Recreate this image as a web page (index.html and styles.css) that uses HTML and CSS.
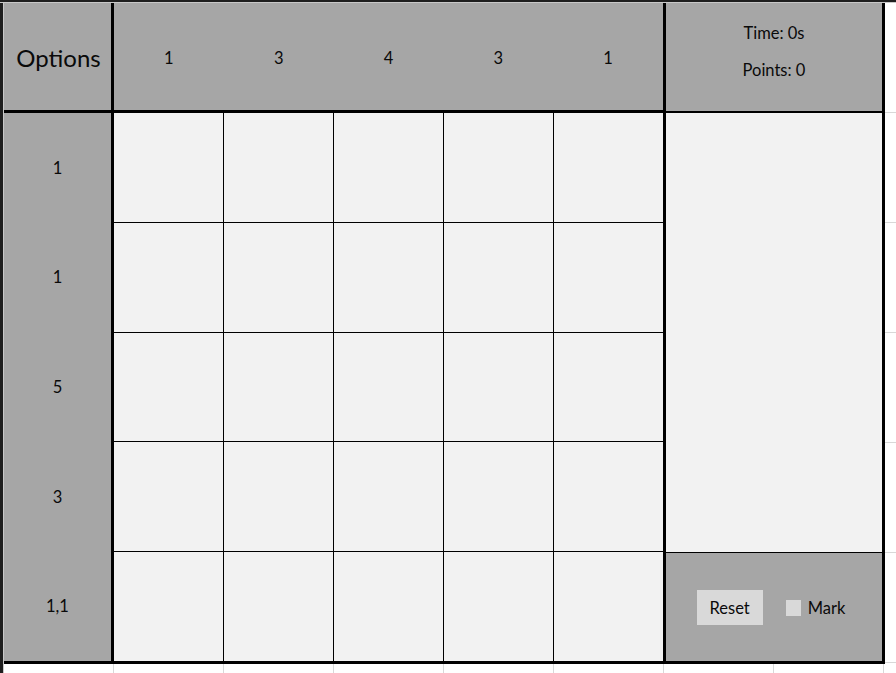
FILE: index.html
```html
<!DOCTYPE html>
<html>
<head>
<meta charset="utf-8">
<link rel="stylesheet" href="styles.css">
</head>
<body>
<div class="board">
  <div class="corner">Options</div>
  <div class="col-clues">
    <span>1</span><span>3</span><span>4</span><span>3</span><span>1</span>
  </div>
  <div class="status">
    <div>Time: 0s</div>
    <div>Points: 0</div>
  </div>
  <div class="row-clues">
    <span>1</span><span>1</span><span>5</span><span>3</span><span>1,1</span>
  </div>
  <div class="cells">
    <div></div><div></div><div></div><div></div><div></div>
    <div></div><div></div><div></div><div></div><div></div>
    <div></div><div></div><div></div><div></div><div></div>
    <div></div><div></div><div></div><div></div><div></div>
    <div></div><div></div><div></div><div></div><div></div>
  </div>
  <div class="side">
    <div class="side-blank"></div>
    <div class="controls">
      <button class="reset" type="button">Reset</button>
      <label class="mark"><span class="box"></span>Mark</label>
    </div>
  </div>
</div>
</body>
</html>
```
FILE: styles.css
```css
html, body {
  margin: 0;
  height: 100%;
}
body {
  padding: 3px 0 0 4px;
  box-sizing: border-box;
  font-family: Lato, "Open Sans", sans-serif;
  color: #0a0a0a;
  background-color: #fff;
  background-image:
    linear-gradient(to bottom, #1e1e1e 0, #1e1e1e 2px, #c8c8c8 2px, #c8c8c8 3px, transparent 3px),
    linear-gradient(to right, #1e1e1e 0, #1e1e1e 3px, #c8c8c8 3px, #c8c8c8 4px, transparent 4px),
    repeating-linear-gradient(to right, transparent 0, transparent 3px, #d8d8d8 3px, #d8d8d8 4px, transparent 4px, transparent 110px),
    repeating-linear-gradient(to bottom, transparent 0, transparent 2px, #d8d8d8 2px, #d8d8d8 3px, transparent 3px, transparent 110px);
}
.board {
  display: grid;
  grid-template-columns: 107px 549px 216px;
  grid-template-rows: 107px 548px;
  column-gap: 3px;
  row-gap: 3px;
  background: #000;
  border-right: 3px solid #000;
  border-bottom: 3px solid #000;
  width: max-content;
}
.corner {
  background: #a6a6a6;
  display: flex;
  align-items: center;
  justify-content: center;
  font-size: 24px;
  padding-top: 2px;
  padding-left: 2px;
  box-sizing: border-box;
}
.col-clues {
  background: #a6a6a6;
  display: grid;
  grid-template-columns: repeat(5, 1fr);
  align-items: center;
  justify-items: center;
  font-size: 16.5px;
  padding-top: 3px;
  box-sizing: border-box;
}
.status {
  background: #a6a6a6;
  display: flex;
  flex-direction: column;
  align-items: center;
  gap: 17px;
  padding-top: 20px;
  box-sizing: border-box;
  font-size: 16.5px;
  margin-bottom: -1px;
}
.row-clues {
  background: #a6a6a6;
  display: grid;
  grid-template-rows: repeat(5, 1fr);
  align-items: center;
  justify-items: center;
  font-size: 16.5px;
}
.cells {
  display: grid;
  grid-template-columns: repeat(5, 1fr);
  grid-template-rows: repeat(5, 1fr);
  gap: 1px;
  background: #000;
}
.cells div {
  background: #f2f2f2;
}
.side {
  display: flex;
  flex-direction: column;
  gap: 1px;
  background: #000;
}
.side-blank {
  height: 439px;
  background: #f2f2f2;
}
.controls {
  flex: 1;
  background: #a6a6a6;
  display: flex;
  align-items: center;
  justify-content: center;
  padding-right: 6px;
  padding-top: 1px;
}
.reset {
  width: 66px;
  height: 35px;
  border: none;
  background: #d9d9d9;
  font-family: inherit;
  font-size: 16.5px;
  color: #0a0a0a;
  padding: 0;
  margin-right: 23px;
}
.mark {
  display: flex;
  align-items: center;
  font-size: 16.5px;
}
.box {
  width: 15px;
  height: 16px;
  background: #d9d9d9;
  margin-right: 7px;
}
```
